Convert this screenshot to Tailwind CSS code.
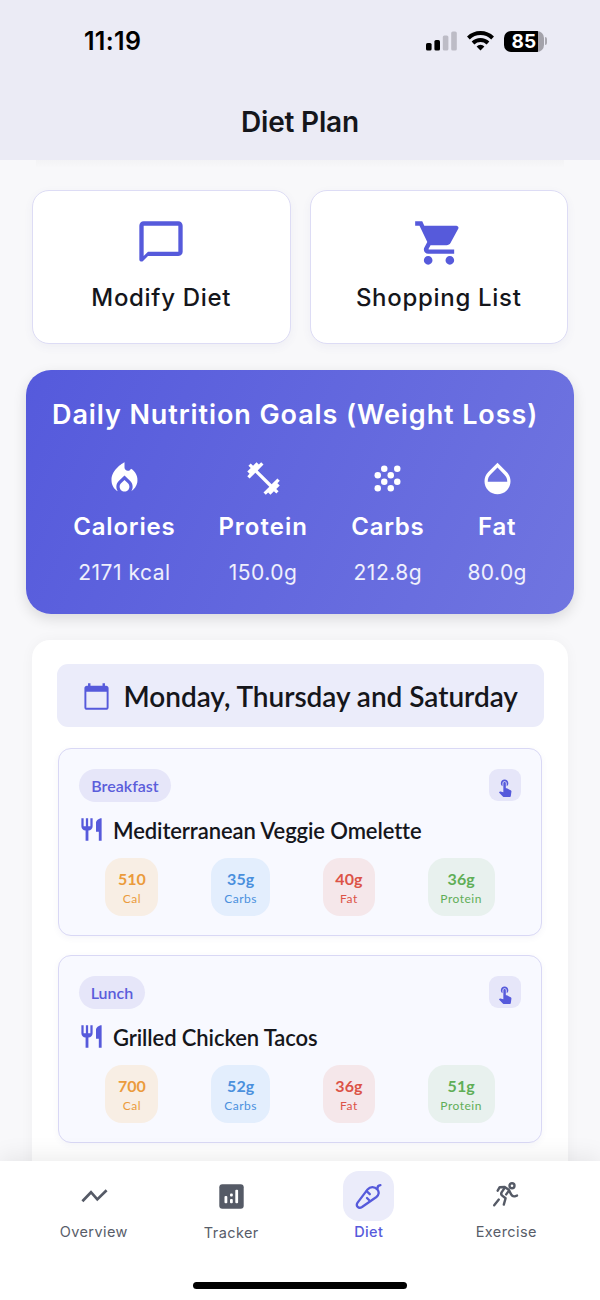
<!DOCTYPE html>
<html lang="en">
<head>
    <meta charset="UTF-8">
    <meta name="viewport" content="width=device-width, initial-scale=1.0">
    <title>Diet Plan</title>
    <script src="https://cdn.jsdelivr.net/npm/@tailwindcss/browser@4"></script>
</head>
<body class="bg-[#f8f8fa] font-['Inter',sans-serif] text-[#15161b]">
    <!-- Shared icons -->
    <svg class="hidden">
        <symbol id="icon-restaurant" viewBox="0 0 24 24">
            <path d="M11 9H9V2H7v7H5V2H3v7c0 2.12 1.66 3.84 3.75 3.97V22h2.5v-9.03C11.34 12.84 13 11.12 13 9V2h-2v7zm5-3v8h2.5v8H21V2c-2.76 0-5 2.24-5 4z"/>
        </symbol>
        <symbol id="icon-touch" viewBox="0 0 24 24">
            <path d="M9 11.24V7.5C9 6.12 10.12 5 11.5 5S14 6.12 14 7.5v3.74c1.21-.81 2-2.18 2-3.74C16 5.01 13.99 3 11.5 3S7 5.01 7 7.5c0 1.56.79 2.93 2 3.74zm9.84 4.63l-4.54-2.26c-.17-.07-.35-.11-.54-.11H13v-6c0-.83-.67-1.5-1.5-1.5S10 6.67 10 7.5v10.74l-3.43-.72c-.08-.01-.15-.03-.24-.03-.31 0-.59.13-.79.33l-.79.8 4.94 4.94c.27.27.65.44 1.06.44h6.79c.75 0 1.33-.55 1.44-1.28l.75-5.27c.01-.07.02-.14.02-.2 0-.62-.38-1.16-.91-1.38z"/>
        </symbol>
    </svg>

    <div class="flex h-[1300px] w-[600px] flex-col overflow-hidden">
        <!-- Header -->
        <header class="h-[160px] shrink-0 bg-[#ebebf5]">
            <div class="flex h-[82px] items-center justify-between pr-[53px] pl-[84px]">
                <span class="pt-px text-[25px] font-semibold tracking-[0.3px] text-black">11:19</span>
                <div class="flex items-center">
                    <svg class="mr-[10px] h-[20px] w-[31px]" viewBox="0 0 31 20">
                        <rect x="0" y="12" width="5.6" height="7.5" rx="1.6" fill="#000"/>
                        <rect x="8.4" y="9" width="5.6" height="10.5" rx="1.6" fill="#000"/>
                        <rect x="16.8" y="4.5" width="5.6" height="15" rx="1.6" fill="#bdbcc6"/>
                        <rect x="25.2" y="0.5" width="5.6" height="19" rx="1.6" fill="#bdbcc6"/>
                    </svg>
                    <svg class="mr-[10px] h-[20px] w-[27px]" viewBox="0 0 27 20" fill="none" stroke="#000" stroke-width="3.9">
                        <path d="M1.4 7a17.2 17.2 0 0 1 24.2 0"/>
                        <path d="M6 12a10.8 10.8 0 0 1 15 0"/>
                        <path d="M13.5 19.4l-3.9-4a5.6 5.6 0 0 1 7.8 0z" fill="#000" stroke="none"/>
                    </svg>
                    <div class="flex items-center">
                        <div class="flex h-[21px] w-[40px] items-center justify-center rounded-[7px] bg-linear-to-r from-black from-84% to-[#a3a2aa] to-84%">
                            <span class="text-[19px] leading-none font-bold tracking-[0.3px] text-white">85</span>
                        </div>
                        <div class="ml-px h-[8px] w-[2px] rounded-r-full bg-[#a9a8b0]"></div>
                    </div>
                </div>
            </div>
            <h1 class="pt-[19px] text-center text-[28px] leading-[42px] font-semibold tracking-[-0.2px]">Diet Plan</h1>
        </header>

        <main class="flex min-h-0 flex-1 flex-col overflow-hidden">
            <div class="mx-[36px] h-[8px] shrink-0 bg-linear-to-b from-[#f3f3f5] to-[#f8f8fa]"></div>

            <!-- Quick actions -->
            <div class="mt-[22px] grid shrink-0 grid-cols-2 gap-[19px] px-[32px]">
                <button class="flex h-[154px] flex-col items-center rounded-[17px] border-[1.5px] border-[#dddcf5] bg-white pt-[26px] shadow-[0_3px_10px_rgba(80,80,160,0.06)]">
                    <svg class="h-[52px] w-[52px] fill-[#565adb]" viewBox="0 0 24 24"><path d="M20 2H4c-1.1 0-2 .9-2 2v15.59c0 .89 1.08 1.34 1.71.71L6 18h14c1.1 0 2-.9 2-2V4c0-1.1-.9-2-2-2zm0 14H6l-2 2V4h16v12z"/></svg>
                    <span class="mt-[11px] text-[24px] leading-[36px] font-medium tracking-[0.7px]">Modify Diet</span>
                </button>
                <button class="flex h-[154px] flex-col items-center rounded-[17px] border-[1.5px] border-[#dddcf5] bg-white pt-[26px] shadow-[0_3px_10px_rgba(80,80,160,0.06)]">
                    <svg class="h-[52px] w-[52px] fill-[#565adb]" viewBox="0 0 24 24"><path d="M7 18c-1.1 0-1.99.9-1.99 2S5.9 22 7 22s2-.9 2-2-.9-2-2-2zM1 2v2h2l3.6 7.59-1.35 2.45c-.16.28-.25.61-.25.96 0 1.1.9 2 2 2h12v-2H7.42c-.14 0-.25-.11-.25-.25l.03-.12.9-1.63h7.45c.75 0 1.41-.41 1.75-1.03l3.58-6.49c.08-.14.12-.31.12-.48 0-.55-.45-1-1-1H5.21l-.94-2H1zm16 16c-1.1 0-1.99.9-1.99 2s.89 2 1.99 2 2-.9 2-2-.9-2-2-2z"/></svg>
                    <span class="mt-[11px] text-[24px] leading-[36px] font-medium tracking-[0.7px]">Shopping List</span>
                </button>
            </div>

            <!-- Daily goals -->
            <section class="mx-[26px] mt-[25.5px] h-[244px] shrink-0 rounded-[25px] bg-linear-[114deg] from-[#555adc] to-[#7075e0] px-[26px] pt-[25.5px] text-white shadow-[0_5px_14px_rgba(0,0,0,0.12)]">
                <h2 class="text-[27px] leading-[40px] font-semibold tracking-[0.9px] whitespace-nowrap">Daily Nutrition Goals (Weight Loss)</h2>
                <div class="mt-[24px] flex justify-around">
                    <div class="flex w-[101px] flex-col items-center whitespace-nowrap">
                        <svg class="h-[39px] w-[39px] fill-white" viewBox="0 0 24 24"><path d="M12 12.9l-2.13 2.09C9.31 15.55 9 16.28 9 17.06 9 18.68 10.35 20 12 20s3-1.32 3-2.94c0-.78-.31-1.52-.87-2.07L12 12.9z"/><path d="M16 6l-.44.55C14.38 8.02 12 7.19 12 5.3V2S4 6 4 13c0 2.92 1.56 5.47 3.89 6.86-.56-.79-.89-1.76-.89-2.8 0-1.32.52-2.56 1.47-3.5L12 10.1l3.53 3.47c.95.93 1.47 2.17 1.47 3.5 0 1.02-.31 1.96-.85 2.75 1.89-1.15 3.29-3.06 3.71-5.3.66-3.55-1.07-6.9-3.86-8.52z"/></svg>
                        <span class="mt-[11px] text-[24px] leading-[36px] font-semibold tracking-[0.8px]">Calories</span>
                        <span class="mt-[12px] text-[21px] leading-[32px] font-normal tracking-[0.5px] text-white/90">2171 kcal</span>
                    </div>
                    <div class="flex w-[89px] flex-col items-center whitespace-nowrap">
                        <svg class="h-[39px] w-[39px] fill-white" viewBox="0 0 24 24"><path d="M20.57 14.86L22 13.43 20.57 12 17 15.57 8.43 7 12 3.43 10.57 2 9.14 3.43 7.71 2 5.57 4.14 4.14 2.71 2.71 4.14l1.43 1.43L2 7.71l1.43 1.43L2 10.57 3.43 12 7 8.43 15.57 17 12 20.57 13.43 22l1.43-1.43L16.29 22l2.14-2.14 1.43 1.43 1.43-1.43-1.43-1.43L22 16.29z"/></svg>
                        <span class="mt-[11px] text-[24px] leading-[36px] font-semibold tracking-[1px]">Protein</span>
                        <span class="mt-[12px] text-[21px] leading-[32px] font-normal tracking-[0.5px] text-white/90">150.0g</span>
                    </div>
                    <div class="flex w-[73px] flex-col items-center whitespace-nowrap">
                        <svg class="h-[39px] w-[39px] fill-white" viewBox="0 0 24 24">
                            <circle cx="10" cy="6" r="2"/><circle cx="18" cy="6" r="2"/>
                            <circle cx="6" cy="10" r="2"/><circle cx="14" cy="10" r="2"/>
                            <circle cx="10" cy="14" r="2"/><circle cx="18" cy="14" r="2"/>
                            <circle cx="6" cy="18" r="2"/><circle cx="14" cy="18" r="2"/>
                        </svg>
                        <span class="mt-[11px] text-[24px] leading-[36px] font-semibold tracking-[0.7px]">Carbs</span>
                        <span class="mt-[12px] text-[21px] leading-[32px] font-normal tracking-[0.5px] text-white/90">212.8g</span>
                    </div>
                    <div class="flex w-[58px] flex-col items-center whitespace-nowrap">
                        <svg class="h-[39px] w-[39px] fill-white" viewBox="0 0 24 24"><path d="M17.66 8L12 2.35 6.34 8C4.78 9.56 4 11.64 4 13.64s.78 4.11 2.34 5.67 3.61 2.35 5.66 2.35 4.1-.79 5.66-2.35S20 15.64 20 13.64 19.22 9.56 17.66 8zM6 14c.01-2 .62-3.27 1.76-4.4L12 5.27l4.24 4.38C17.38 10.77 17.99 12 18 14H6z"/></svg>
                        <span class="mt-[11px] text-[24px] leading-[36px] font-semibold tracking-[0.7px]">Fat</span>
                        <span class="mt-[12px] text-[21px] leading-[32px] font-normal tracking-[0.4px] text-white/90">80.0g</span>
                    </div>
                </div>
            </section>

            <!-- Meals of the day -->
            <section class="mx-[32px] mt-[26px] h-[600px] shrink-0 rounded-t-[18px] bg-white px-[24.5px] pt-[24px] font-['Lato',sans-serif] shadow-[0_0_14px_rgba(0,0,0,0.04)]">
                <div class="flex h-[63px] items-center rounded-[11px] bg-[#ebecfa] pl-[25px]">
                    <svg class="mt-[2px] h-[29px] w-[29px] fill-[#565adb]" viewBox="0 0 24 24"><path d="M20 3h-1V1h-2v2H7V1H5v2H4c-1.1 0-2 .9-2 2v16c0 1.1.9 2 2 2h16c1.1 0 2-.9 2-2V5c0-1.1-.9-2-2-2zm0.4 18.4H3.6V8h16.8v13.4z"/></svg>
                    <h2 class="ml-[13px] pt-[2px] text-[28px] leading-[36px] font-semibold tracking-[-0.03px] whitespace-nowrap">Monday, Thursday and Saturday</h2>
                </div>

                <article class="mx-[1.5px] mt-[21px] h-[188px] rounded-[13px] border-[1.5px] border-[#d9d8f5] bg-[#f8f9ff] px-[20px] pt-[20px] shadow-[0_2px_6px_rgba(80,80,160,0.06)]">
                    <div class="flex items-center justify-between">
                        <span class="flex h-[33px] w-[92px] items-center justify-center rounded-full bg-[#e6e6f9] pt-px text-[16px] font-semibold text-[#5b5ddb]">Breakfast</span>
                        <button class="flex h-[32px] w-[32px] items-center justify-center rounded-[9px] bg-[#e6e6f9] pt-[3px]"><svg class="h-[20px] w-[20px] fill-[#565adb]"><use href="#icon-touch"/></svg></button>
                    </div>
                    <div class="mt-[12px] flex h-[32px] items-center">
                        <svg class="-ml-px h-[27px] w-[27px] fill-[#565adb]"><use href="#icon-restaurant"/></svg>
                        <h3 class="ml-[8px] pt-[3px] text-[22px] leading-[30px] font-semibold tracking-[-0.1px] whitespace-nowrap">Mediterranean Veggie Omelette</h3>
                    </div>
                    <div class="mt-[12px] flex justify-around">
                        <div class="flex h-[58px] w-[53px] flex-col items-center rounded-[17px] bg-[#f8eee4] pt-[11px] text-[#eb9b3c]">
                            <span class="text-[16px] leading-[20px] font-bold">510</span>
                            <span class="text-[12px] leading-[20px] tracking-[0.5px]">Cal</span>
                        </div>
                        <div class="flex h-[58px] w-[59px] flex-col items-center rounded-[17px] bg-[#e3eefd] pt-[11px] text-[#4a90dd]">
                            <span class="text-[16px] leading-[20px] font-bold">35g</span>
                            <span class="text-[12px] leading-[20px] tracking-[0.5px]">Carbs</span>
                        </div>
                        <div class="flex h-[58px] w-[52px] flex-col items-center rounded-[17px] bg-[#f5e7ea] pt-[11px] text-[#dc5347]">
                            <span class="text-[16px] leading-[20px] font-bold">40g</span>
                            <span class="text-[12px] leading-[20px] tracking-[0.5px]">Fat</span>
                        </div>
                        <div class="flex h-[58px] w-[67px] flex-col items-center rounded-[17px] bg-[#e8f1ee] pt-[11px] text-[#5fae57]">
                            <span class="text-[16px] leading-[20px] font-bold">36g</span>
                            <span class="text-[12px] leading-[20px] tracking-[0.5px]">Protein</span>
                        </div>
                    </div>
                </article>

                <article class="mx-[1.5px] mt-[19px] h-[188px] rounded-[13px] border-[1.5px] border-[#d9d8f5] bg-[#f8f9ff] px-[20px] pt-[20px] shadow-[0_2px_6px_rgba(80,80,160,0.06)]">
                    <div class="flex items-center justify-between">
                        <span class="flex h-[33px] w-[66px] items-center justify-center rounded-full bg-[#e6e6f9] pt-px text-[16px] font-semibold text-[#5b5ddb]">Lunch</span>
                        <button class="flex h-[32px] w-[32px] items-center justify-center rounded-[9px] bg-[#e6e6f9] pt-[3px]"><svg class="h-[20px] w-[20px] fill-[#565adb]"><use href="#icon-touch"/></svg></button>
                    </div>
                    <div class="mt-[12px] flex h-[32px] items-center">
                        <svg class="-ml-px h-[27px] w-[27px] fill-[#565adb]"><use href="#icon-restaurant"/></svg>
                        <h3 class="ml-[8px] pt-[3px] text-[22px] leading-[30px] font-semibold tracking-[-0.1px] whitespace-nowrap">Grilled Chicken Tacos</h3>
                    </div>
                    <div class="mt-[12px] flex justify-around">
                        <div class="flex h-[58px] w-[53px] flex-col items-center rounded-[17px] bg-[#f8eee4] pt-[11px] text-[#eb9b3c]">
                            <span class="text-[16px] leading-[20px] font-bold">700</span>
                            <span class="text-[12px] leading-[20px] tracking-[0.5px]">Cal</span>
                        </div>
                        <div class="flex h-[58px] w-[59px] flex-col items-center rounded-[17px] bg-[#e3eefd] pt-[11px] text-[#4a90dd]">
                            <span class="text-[16px] leading-[20px] font-bold">52g</span>
                            <span class="text-[12px] leading-[20px] tracking-[0.5px]">Carbs</span>
                        </div>
                        <div class="flex h-[58px] w-[52px] flex-col items-center rounded-[17px] bg-[#f5e7ea] pt-[11px] text-[#dc5347]">
                            <span class="text-[16px] leading-[20px] font-bold">36g</span>
                            <span class="text-[12px] leading-[20px] tracking-[0.5px]">Fat</span>
                        </div>
                        <div class="flex h-[58px] w-[67px] flex-col items-center rounded-[17px] bg-[#e8f1ee] pt-[11px] text-[#5fae57]">
                            <span class="text-[16px] leading-[20px] font-bold">51g</span>
                            <span class="text-[12px] leading-[20px] tracking-[0.5px]">Protein</span>
                        </div>
                    </div>
                </article>
            </section>
        </main>

        <!-- Bottom navigation -->
        <nav class="relative h-[139px] shrink-0 bg-white px-[25px] pt-[10px] text-[14.5px] leading-[20px] tracking-[0.4px] text-[#585d69] shadow-[0_-4px_22px_rgba(0,0,0,0.08)]">
            <div class="grid grid-cols-4">
                <a class="flex flex-col items-center">
                    <span class="mb-px flex h-[50px] w-[51px] items-center justify-center">
                        <svg class="h-[28px] w-[28px]" viewBox="0 0 28 28" fill="none" stroke="#555a66" stroke-width="2.7"><path d="M2.4 19.3L11 10.2l6.3 7.2 9.3-9.2"/></svg>
                    </span>
                    <span>Overview</span>
                </a>
                <a class="flex flex-col items-center">
                    <span class="mb-[2px] flex h-[50px] w-[51px] items-center justify-center">
                        <svg class="h-[25px] w-[25px]" viewBox="0 0 25 25">
                            <rect x="0.3" y="0.3" width="24.4" height="24.4" rx="3" fill="#555a66"/>
                            <g fill="#fff">
                                <rect x="5.5" y="12" width="2.8" height="7.3" rx="1"/>
                                <rect x="11" y="9.6" width="2.8" height="2.8" rx="1"/>
                                <rect x="11" y="15" width="2.8" height="4.3" rx="1"/>
                                <rect x="16.3" y="5.7" width="2.8" height="13.6" rx="1"/>
                            </g>
                        </svg>
                    </span>
                    <span>Tracker</span>
                </a>
                <a class="flex flex-col items-center font-medium text-[#565adb]">
                    <span class="mb-px flex h-[50px] w-[51px] items-center justify-center rounded-[16px] bg-[#ebecfa]">
                        <svg class="h-[28px] w-[28px]" viewBox="0 0 28 28" fill="none" stroke="#565adb" stroke-width="2.3" stroke-linecap="round" stroke-linejoin="round">
                            <path d="M12.6 7.4L2.6 20.6c-2.2 3.4 1 6.600 4.400 4.400L21.400 15c2.600-2 3-5.200 1-7.600-2.800-3-7.200-3.200-9.800 0z"/>
                            <path d="M22.400 6.800c0-2.200.8-3.400 3-3.600"/>
                            <path d="M11.600 9.200l3.200 3M12 16l2 2"/>
                        </svg>
                    </span>
                    <span>Diet</span>
                </a>
                <a class="flex flex-col items-center">
                    <span class="mb-px flex h-[50px] w-[51px] items-center justify-center">
                        <svg class="h-[28px] w-[28px]" viewBox="0 0 28 28" fill="none" stroke="#555a66" stroke-width="2.4" stroke-linecap="round" stroke-linejoin="round">
                            <circle cx="20" cy="3.700" r="2.500"/>
                            <path d="M5.700 8.700L7.700 5.200l5-.2 4 2.800 2.600 4.800c.9 1.600 2 2 3.400 1.700l2.300-.7"/>
                            <path d="M12.300 6.400L9.600 10.400c-.8 1.400-.4 2.400.6 3.200l3.400 2.600-1.800 6.400"/>
                            <path d="M17 8.600l-2.800 3.800"/>
                            <path d="M6.800 17.600l-4.600 5.600"/>
                        </svg>
                    </span>
                    <span>Exercise</span>
                </a>
            </div>
            <div class="mx-auto mt-[39px] h-[7px] w-[214px] rounded-full bg-black"></div>
        </nav>
    </div>
</body>
</html>
